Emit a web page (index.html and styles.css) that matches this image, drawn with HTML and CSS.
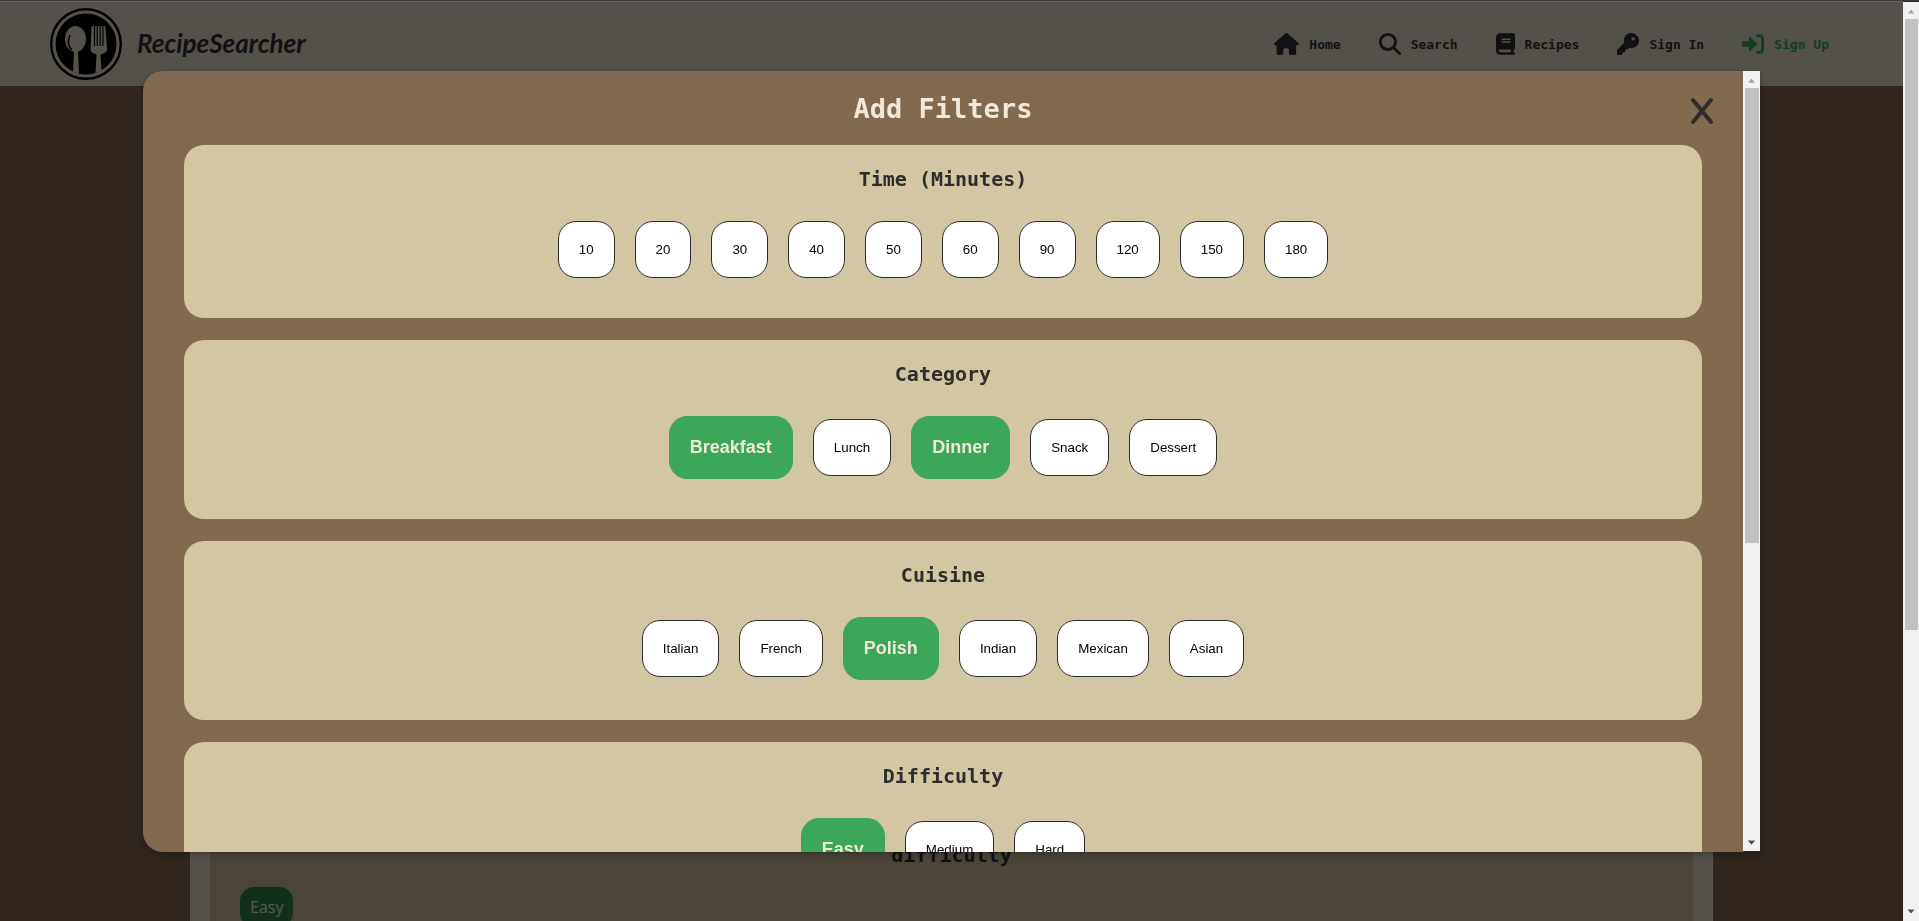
FILE: index.html
```html
<!DOCTYPE html>
<html lang="en">
<head>
<meta charset="utf-8">
<title>RecipeSearcher</title>
<link rel="stylesheet" href="styles.css">
</head>
<body>
<div class="screen">
  <div class="page">
    <header class="header">
      <a class="brand" href="#">
        <svg class="logo" viewBox="0 0 72 72" aria-hidden="true">
          <circle cx="36" cy="36" r="34.8" fill="none" stroke="#000" stroke-width="2.4"/>
          <circle cx="36" cy="36" r="30.5" fill="#000"/>
          <g fill="#54504a">
            <ellipse cx="25.500" cy="31" rx="10.500" ry="13"/>
            <path d="M24 43h4l1 23-6-2z"/>
            <path d="M41.500 18h14l1.500 24q-1 3-5.500 4l-1 1 1 16-6 2 1-18-1-1q-4-1-5-4z"/>
          </g>
          <path d="M44.500 18v20M47.300 18v20M50.200 18v20M53 18v20" stroke="#000" stroke-width="1.200"/>
          <path d="M20 27q-4 10 2 15" fill="none" stroke="#000" stroke-width="1.500"/>
        </svg>
        <span class="brand-name">RecipeSearcher</span>
      </a>
      <nav class="nav">
        <a href="#" class="nav-link">
          <svg class="icon wide" viewBox="0 0 576 512" fill="currentColor" aria-hidden="true"><path d="M575.800 255.500c0 18-15 32.100-32 32.100h-32l.7 160.200c0 2.700-.2 5.400-.5 8.100V472c0 22.100-17.900 40-40 40h-88c-22.100 0-40-17.900-40-40v-88c0-17.700-14.300-32-32-32h-64c-17.700 0-32 14.300-32 32v88c0 22.100-17.900 40-40 40h-80c-22.100 0-40-17.900-40-40V287.600H32c-18 0-32-14-32-32.100 0-9 3-17 10-24L266.400 8c7-7 15-8 22-8s15 2 21 7l255.400 224.500c8 7 12 15 11 24z"/></svg>
          Home
        </a>
        <a href="#" class="nav-link">
          <svg class="icon" viewBox="0 0 512 512" fill="currentColor" aria-hidden="true"><path d="M416 208c0 45.900-14.900 88.300-40 122.700l126.600 126.700c12.500 12.500 12.500 32.800 0 45.300s-32.800 12.500-45.300 0L330.700 376c-34.400 25.200-76.800 40-122.700 40C93.100 416 0 322.900 0 208S93.100 0 208 0s208 93.100 208 208zM208 352a144 144 0 1 0 0-288 144 144 0 1 0 0 288z"/></svg>
          Search
        </a>
        <a href="#" class="nav-link">
          <svg class="icon narrow" viewBox="0 0 448 512" fill="currentColor" aria-hidden="true"><path d="M96 0C43 0 0 43 0 96v320c0 53 43 96 96 96h320c17.700 0 32-14.300 32-32s-14.300-32-32-32v-64c17.700 0 32-14.300 32-32V32c0-17.700-14.300-32-32-32H96zm0 384h256v64H96c-17.700 0-32-14.300-32-32s14.300-32 32-32zm32-240c0-8.800 7.200-16 16-16h192c8.800 0 16 7.200 16 16s-7.200 16-16 16H144c-8.800 0-16-7.200-16-16zm16 48h192c8.800 0 16 7.200 16 16s-7.200 16-16 16H144c-8.800 0-16-7.200-16-16s7.200-16 16-16z"/></svg>
          Recipes
        </a>
        <a href="#" class="nav-link">
          <svg class="icon" viewBox="0 0 512 512" fill="currentColor" aria-hidden="true"><path d="M336 352c97.200 0 176-78.800 176-176S433.200 0 336 0 160 78.800 160 176c0 18.700 2.900 36.800 8.300 53.700L7 391c-4.500 4.500-7 10.600-7 17v80c0 13.300 10.700 24 24 24h80c13.300 0 24-10.700 24-24v-40h40c13.300 0 24-10.700 24-24v-40h40c6.400 0 12.500-2.500 17-7l33.300-33.300c16.900 5.400 35 8.300 53.700 8.300zM376 96a40 40 0 1 1 0 80 40 40 0 1 1 0-80z"/></svg>
          Sign In
        </a>
        <a href="#" class="nav-link accent">
          <svg class="icon" viewBox="0 0 512 512" fill="currentColor" aria-hidden="true"><path d="M352 96h64c17.700 0 32 14.300 32 32v256c0 17.700-14.300 32-32 32h-64c-17.700 0-32 14.300-32 32s14.300 32 32 32h64c53 0 96-43 96-96V128c0-53-43-96-96-96h-64c-17.700 0-32 14.300-32 32s14.300 32 32 32zm-7.500 177.400c4.800-4.500 7.500-10.800 7.500-17.400s-2.700-12.900-7.500-17.400l-144-136c-7-6.600-17.200-8.400-26-4.600s-14.500 12.500-14.500 22v72H32c-17.700 0-32 14.300-32 32v64c0 17.700 14.300 32 32 32h128v72c0 9.600 5.700 18.200 14.500 22s19 2 26-4.600l144-136z"/></svg>
          Sign Up
        </a>
      </nav>
    </header>
    <main class="main">
      <section class="results">
        <h3 class="results-title">difficulty</h3>
        <div class="tags"><span class="tag">Easy</span></div>
      </section>
    </main>
  </div>
  <div class="scrollbar page-bar" aria-hidden="true">
    <svg class="arrow" viewBox="0 0 16 16" fill="#a3a3a3"><path d="M5 11h6L8 7z"/></svg>
    <div class="track"><div class="thumb"></div></div>
    <svg class="arrow" viewBox="0 0 16 16" fill="#505050"><path d="M4.500 5h7L8 9z"/></svg>
  </div>
</div>

<div class="overlay">
  <div class="modal" role="dialog" aria-labelledby="filters-title">
    <div class="modal-body">
      <div class="modal-head">
        <h1 class="modal-title" id="filters-title">Add Filters</h1>
        <button class="close" type="button" aria-label="Close">
          <svg viewBox="0 0 24 28" aria-hidden="true"><path d="M3 3l18 22M21 3L3 25" fill="none" stroke="currentColor" stroke-width="4" stroke-linecap="round"/></svg>
        </button>
      </div>
      <section class="group">
        <h2 class="group-title">Time (Minutes)</h2>
        <div class="options">
          <button class="option" type="button">10</button>
          <button class="option" type="button">20</button>
          <button class="option" type="button">30</button>
          <button class="option" type="button">40</button>
          <button class="option" type="button">50</button>
          <button class="option" type="button">60</button>
          <button class="option" type="button">90</button>
          <button class="option" type="button">120</button>
          <button class="option" type="button">150</button>
          <button class="option" type="button">180</button>
        </div>
      </section>
      <section class="group">
        <h2 class="group-title">Category</h2>
        <div class="options">
          <button class="option selected" type="button">Breakfast</button>
          <button class="option" type="button">Lunch</button>
          <button class="option selected" type="button">Dinner</button>
          <button class="option" type="button">Snack</button>
          <button class="option" type="button">Dessert</button>
        </div>
      </section>
      <section class="group">
        <h2 class="group-title">Cuisine</h2>
        <div class="options">
          <button class="option" type="button">Italian</button>
          <button class="option" type="button">French</button>
          <button class="option selected" type="button">Polish</button>
          <button class="option" type="button">Indian</button>
          <button class="option" type="button">Mexican</button>
          <button class="option" type="button">Asian</button>
        </div>
      </section>
      <section class="group">
        <h2 class="group-title">Difficulty</h2>
        <div class="options">
          <button class="option selected" type="button">Easy</button>
          <button class="option" type="button">Medium</button>
          <button class="option" type="button">Hard</button>
        </div>
      </section>
    </div>
    <div class="scrollbar modal-bar" aria-hidden="true">
      <svg class="arrow" viewBox="0 0 16 16" fill="#a3a3a3"><path d="M5 11h6L8 7z"/></svg>
      <div class="track"><div class="thumb"></div></div>
      <svg class="arrow" viewBox="0 0 16 16" fill="#505050"><path d="M4.500 6h7L8 10z"/></svg>
    </div>
  </div>
</div>
</body>
</html>
```
FILE: styles.css
```css
* { box-sizing: border-box; }

body {
  margin: 0;
  height: 100vh;
  overflow: hidden;
  background: #30261e;
  color: #111;
  font-family: "DejaVu Sans Mono", monospace;
}

.screen {
  display: flex;
  height: 100vh;
  border-top: 1px solid #3a3a3a;
}

.page {
  flex: 1;
  min-width: 0;
  display: flex;
  flex-direction: column;
  border-top: 1px solid #66645f;
}

.header {
  display: flex;
  align-items: center;
  justify-content: space-between;
  height: 84px;
  padding: 0 74px 0 50px;
  background: #54504a;
}

.brand {
  display: flex;
  align-items: center;
  gap: 15px;
  color: #111;
  text-decoration: none;
}

.logo { width: 72px; height: 72px; }

.brand-name {
  padding-bottom: 3px;
  font: italic 700 26px/32px Lato, sans-serif;
}

.nav { display: flex; gap: 38px; }

.nav-link {
  display: flex;
  align-items: center;
  gap: 10px;
  color: #111;
  font-size: 13px;
  font-weight: 700;
  text-decoration: none;
}

.accent { color: #12401f; }

.icon { width: 22px; height: 22px; }
.wide { width: 25px; }
.narrow { width: 19px; }

.main {
  flex: 1;
  min-height: 0;
  display: flex;
  padding: 0 190px;
}

.results {
  flex: 1;
  display: flex;
  flex-direction: column;
  justify-content: flex-end;
  padding: 0 30px;
  background: #4a4538;
  border: solid #54504a;
  border-width: 0 20px;
}

.results-title {
  margin: 0 0 16px;
  font-size: 20px;
  line-height: 32px;
  text-align: center;
}

.tags { height: 34px; }

.tag {
  display: inline-block;
  padding: 8px 10px;
  border-radius: 14px;
  background: #11301c;
  color: #5b5a52;
  font: 16px/24px "Open Sans", sans-serif;
}

.scrollbar {
  display: flex;
  flex-direction: column;
  background: #f1f1f1;
}

.page-bar { width: 16px; margin-top: 1px; }
.modal-bar { width: 17px; margin-bottom: 1px; }
.arrow { width: 100%; height: 17px; }
.track { flex: 1; padding: 0 1px 0 2px; }
.thumb { background: #c1c1c1; }
.page-bar .thumb { height: 69%; }
.modal-bar .thumb { height: 61%; }

.overlay {
  position: fixed;
  inset: 2px 16px 0 0;
  display: flex;
  align-items: center;
  justify-content: center;
}

.modal {
  display: flex;
  width: 85%;
  height: 85%;
  overflow: hidden;
  border-radius: 20px 0 0 20px;
  box-shadow: 0 2px 6px rgba(0, 0, 0, 0.3);
}

.modal-body {
  flex: 1;
  overflow: hidden;
  padding: 0 41px;
  background: #826a51;
}

.modal-head {
  position: relative;
  padding: 19px 0 18px;
}

.modal-title {
  margin: 0;
  color: #f1e8d9;
  font-size: 27px;
  line-height: 37px;
  text-align: center;
}

.close {
  position: absolute;
  top: 26px;
  right: -12px;
  width: 24px;
  height: 28px;
  padding: 0;
  border: 0;
  background: none;
  color: #2d2d2d;
}

.close svg { display: block; width: 24px; height: 28px; }

.group {
  margin-bottom: 22px;
  padding: 18px 0 40px;
  border-radius: 20px;
  background: #d3c6a2;
}

.group-title {
  margin: 0 0 26px;
  color: #2d2d2d;
  font-size: 20px;
  line-height: 32px;
  text-align: center;
}

.options {
  display: flex;
  align-items: center;
  justify-content: center;
  gap: 20px;
}

.option {
  padding: 20px;
  border: 1px solid #2d2d2d;
  border-radius: 18px;
  background: #fff;
  color: #000;
  font-family: "Liberation Sans", Arial, sans-serif;
  line-height: 15px;
}

.selected {
  border-color: #3ca757;
  background: #3ca757;
  color: #f1e8d9;
  font-size: 18px;
  font-weight: 700;
  line-height: 21px;
}
```
